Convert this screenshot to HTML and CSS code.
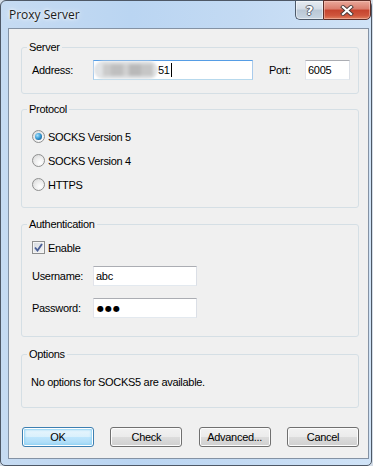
FILE: index.html
```html
<!DOCTYPE html>
<html lang="en">
<head>
  <meta charset="UTF-8">
  <title>Proxy Server</title>
  <link rel="stylesheet" href="styles.css">
</head>
<body>
  <div class="window">
    <div class="titlebar">
      <span class="title">Proxy Server</span>
      <div class="caption">
        <span class="cap-btn help">?</span>
        <span class="cap-btn close">
          <svg width="14" height="11" viewBox="0 0 14 11">
            <path d="M3 2 L11 9 M11 2 L3 9" stroke="#4a3a38" stroke-width="4" stroke-linecap="square"/>
            <path d="M3 2 L11 9 M11 2 L3 9" stroke="#ffffff" stroke-width="2.2" stroke-linecap="square"/>
          </svg>
        </span>
      </div>
    </div>

    <div class="client">
      <fieldset class="group server">
        <legend>Server</legend>
        <div class="body">
          <div class="row">
            <label class="lbl">Address:</label>
            <div class="field address focused">
              <span class="mask"><span class="mask-ink"></span></span>
              <span>51</span>
              <span class="caret"></span>
            </div>
            <label class="port-lbl">Port:</label>
            <div class="field port">6005</div>
          </div>
        </div>
      </fieldset>

      <fieldset class="group protocol">
        <legend>Protocol</legend>
        <div class="body choices">
          <div class="choice"><span class="radio checked"></span><span>SOCKS Version 5</span></div>
          <div class="choice"><span class="radio"></span><span>SOCKS Version 4</span></div>
          <div class="choice"><span class="radio"></span><span>HTTPS</span></div>
        </div>
      </fieldset>

      <fieldset class="group auth">
        <legend>Authentication</legend>
        <div class="body">
          <div class="choice">
            <span class="checkbox">
              <svg width="9" height="9" viewBox="0 0 9 9">
                <path d="M1 4.5 L3.5 7.5 L8 1" fill="none" stroke="#4a5f97" stroke-width="1.9"/>
              </svg>
            </span>
            <span>Enable</span>
          </div>
          <div class="row user-row">
            <label class="lbl">Username:</label>
            <div class="field cred">abc</div>
          </div>
          <div class="row pass-row">
            <label class="lbl">Password:</label>
            <div class="field cred"><span class="dots">●●●</span></div>
          </div>
        </div>
      </fieldset>

      <fieldset class="group options">
        <legend>Options</legend>
        <div class="body">No options for SOCKS5 are available.</div>
      </fieldset>

      <div class="buttons">
        <button class="btn default">OK</button>
        <button class="btn">Check</button>
        <button class="btn">Advanced...</button>
        <button class="btn">Cancel</button>
      </div>
    </div>
  </div>
</body>
</html>
```

FILE: styles.css
```css
* {
    box-sizing: border-box;
}

body {
    margin: 0;
    width: 373px;
    height: 466px;
    overflow: hidden;
    background: #d3dde8;
    font-family: "Liberation Sans", Arial, sans-serif;
    font-size: 11px;
    letter-spacing: -0.3px;
    color: #000;
}

.window {
    width: 372px;
    height: 466px;
    border: 1px solid #4e5866;
    border-radius: 6px 6px 5px 5px;
    background: linear-gradient(to right, #c6dbf2 0%, #bad5f2 35%, #c3daf3 65%, #d0e3f7 100%);
    display: flex;
    flex-direction: column;
}

/* title bar */

.titlebar {
    height: 27px;
    flex-shrink: 0;
    display: flex;
    justify-content: space-between;
    align-items: flex-start;
}

.title {
    font-family: "Open Sans", "Noto Sans", sans-serif;
    font-size: 12px;
    letter-spacing: 0;
    line-height: 27px;
    padding-left: 8px;
    color: #1b1b1b;
    text-shadow: 0 0 6px #fff, 0 0 3px #fff;
}

.caption {
    display: flex;
    margin-top: -1px;
}

.cap-btn {
    height: 20px;
    display: flex;
    align-items: center;
    justify-content: center;
    border: 1px solid #4d5a6a;
}

.help {
    width: 28px;
    border-right: none;
    border-radius: 0 0 0 5px;
    background: linear-gradient(#e6ecf2 0%, #d3dce6 45%, #b9c7d5 50%, #c8d5e2 100%);
    box-shadow: inset 0 0 0 1px rgba(255, 255, 255, 0.5);
    font-family: "DejaVu Sans", sans-serif;
    font-weight: bold;
    font-size: 13px;
    letter-spacing: 0;
    color: #fff;
    text-shadow: 1px 0 0 #5a6270, -1px 0 0 #5a6270, 0 1px 0 #5a6270, 0 -1px 0 #5a6270;
}

.close {
    width: 48px;
    border-color: #5e2e28;
    border-radius: 0 0 5px 0;
    background: linear-gradient(#e9a99b 0%, #da7c6c 45%, #c5432d 50%, #cf553c 80%, #e0805e 100%);
    box-shadow: inset 0 0 0 1px rgba(255, 210, 200, 0.45);
}

/* client area */

.client {
    margin: 0 2px 0 7px;
    height: 431px;
    flex-shrink: 0;
    border: 1px solid #8492a4;
    background: #f0f0f0;
}

.group {
    margin: 0 9px 0 12px;
    padding: 0;
    min-width: 0;
    border: 1px solid #d5dfe5;
    border-radius: 3px;
}

.group legend {
    padding: 0 2px;
    margin-left: 5px;
    line-height: 13px;
}

.server {
    margin-top: 12px;
}

.server .body {
    padding: 6px 0 13px 10px;
}

.protocol {
    margin-top: 9px;
}

.protocol .body {
    padding: 14px 0 16px 10px;
}

.choices {
    display: flex;
    flex-direction: column;
    gap: 11px;
}

.auth {
    margin-top: 10px;
}

.auth .body {
    padding: 10px 0 18px 10px;
}

.user-row,
.pass-row {
    margin-top: 12px;
}

.options {
    margin-top: 11px;
}

.options .body {
    padding: 15px 0 18px 9px;
    line-height: 13px;
}

/* rows and fields */

.row {
    display: flex;
    align-items: center;
    height: 20px;
}

.lbl {
    width: 61px;
}

.port-lbl {
    width: 36px;
    margin-left: 16px;
}

.field {
    height: 20px;
    padding: 0 2px;
    display: flex;
    align-items: center;
    background: #fff;
    border: 1px solid;
    border-color: #abadb3 #dbdfe6 #e3e9ef #e2e3ea;
}

.field.focused {
    border-color: #569de5 #a9cbec #b7d9ed #a9cbec;
}

.address {
    width: 160px;
    padding-left: 1px;
}

.port {
    width: 45px;
}

.cred {
    width: 104px;
}

.mask {
    width: 64px;
    height: 18px;
    margin-left: -1px;
    border-radius: 9px;
    background: #e2e4e6;
    display: flex;
    align-items: center;
    padding-left: 9px;
    filter: blur(0.8px);
}

.mask-ink {
    width: 50px;
    height: 12px;
    background: linear-gradient(to right, #cbcbcb 0 16%, #bfbfbf 16% 40%, #d0d0d0 40% 52%, #b9b9b9 52% 76%, #c6c6c6 76% 100%);
    filter: blur(0.8px);
}

.caret {
    width: 1px;
    height: 14px;
    margin-left: 1px;
    background: #000;
}

.dots {
    font-family: "DejaVu Sans", sans-serif;
    font-size: 8px;
    letter-spacing: 1px;
    padding-left: 1px;
}

/* radios and checkbox */

.choice {
    display: flex;
    align-items: center;
    gap: 3px;
    height: 13px;
}

.radio {
    width: 13px;
    height: 13px;
    border-radius: 50%;
    border: 1px solid #8e8f8f;
    background: radial-gradient(circle at 65% 70%, #ffffff 0%, #f0f0f0 40%, #d4d4d4 100%);
    display: flex;
    align-items: center;
    justify-content: center;
}

.radio.checked::after {
    content: "";
    width: 7px;
    height: 7px;
    border-radius: 50%;
    background: radial-gradient(circle at 35% 35%, #a9e0fb 0%, #3c9fd8 45%, #155f99 80%, #0e3f6a 100%);
}

.checkbox {
    width: 13px;
    height: 13px;
    border: 1px solid #8e8f8f;
    background: linear-gradient(135deg, #d6dbe1 0%, #f4f4f4 100%);
    box-shadow: inset 0 0 0 1px #f4f4f4;
    display: flex;
    align-items: center;
    justify-content: center;
}

/* buttons */

.buttons {
    display: flex;
    justify-content: space-between;
    margin: 19px 9px 0 13px;
}

.btn {
    width: 72px;
    height: 20px;
    padding: 0;
    font-family: "Liberation Sans", Arial, sans-serif;
    font-size: 11px;
    letter-spacing: -0.3px;
    color: #000;
    border: 1px solid #707070;
    border-radius: 3px;
    background: linear-gradient(#f2f2f2 0%, #ebebeb 50%, #dddddd 50%, #cfcfcf 100%);
    box-shadow: inset 0 0 0 1px #fcfcfc;
}

.btn.default {
    border-color: #3c7fb1;
    background: linear-gradient(#eaf6fd 0%, #d9f0fc 50%, #bee6fd 50%, #a7d9f5 100%);
    box-shadow: inset 0 0 0 1px #ffffff, inset 0 0 2px 2px #90d2f4;
}
```
